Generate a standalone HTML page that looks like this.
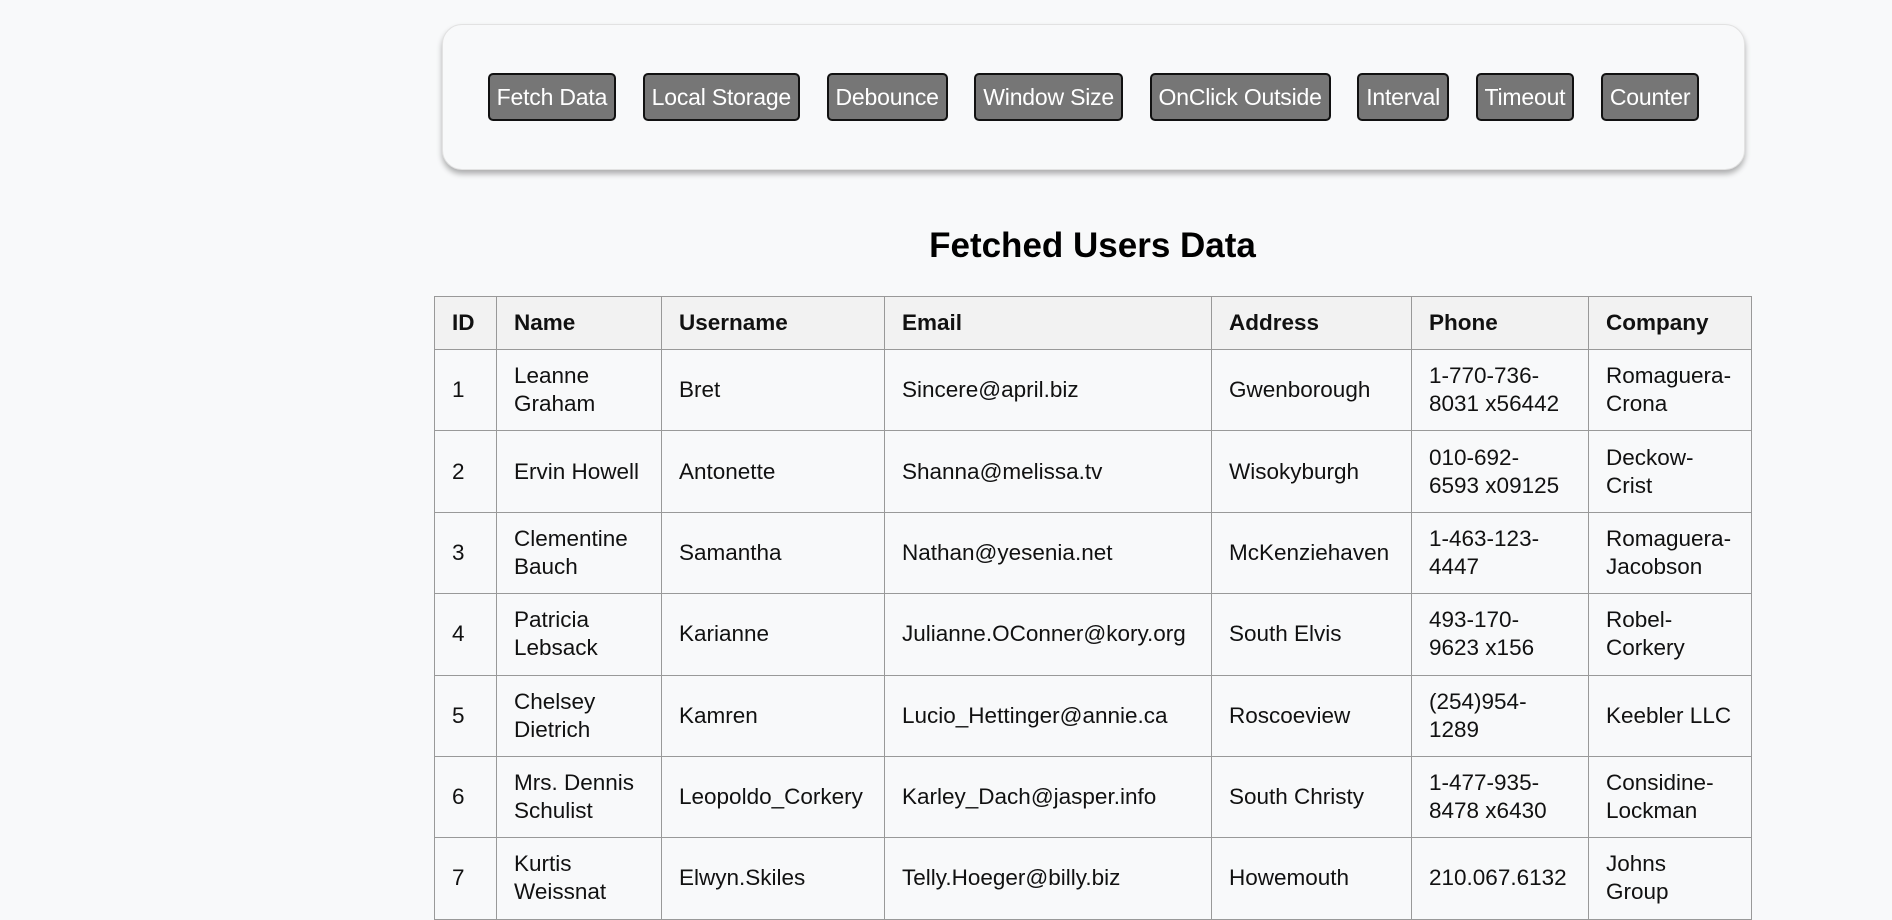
<!DOCTYPE html>
<html><head><meta charset="utf-8"><style>
html,body{margin:0;padding:0;background:#f8f9fa;font-family:"Liberation Sans",Arial,sans-serif;width:1892px;height:867px;overflow:hidden}
.nav{position:absolute;left:442px;top:24px;width:1303px;height:146px;box-sizing:border-box;border:1px solid #e2e2e2;border-radius:20px;background:#f8f9fa;box-shadow:0 4px 6px rgba(0,0,0,.3);display:flex;align-items:center;justify-content:center;gap:26.5px}
.nav span{display:inline-block;background:#767676;color:#fff;border:2px solid #111;border-radius:5px;font-size:23px;height:48px;line-height:44px;box-sizing:border-box;padding:0 7px;white-space:nowrap;letter-spacing:-0.2px}
h2{position:absolute;left:434px;width:1317px;top:226px;margin:0;text-align:center;font-size:35px;font-weight:bold;color:#000}
table{position:absolute;left:434px;top:296px;width:1317px;border-collapse:collapse;table-layout:fixed;font-size:22.5px;color:#111}
td,th{border:1px solid #999;padding:12.2px 17px;line-height:28px;text-align:left;vertical-align:middle}
th{background:#f2f2f2;font-weight:bold;padding:12px 17px}
</style></head><body>
<div class="nav"><span>Fetch Data</span><span>Local Storage</span><span>Debounce</span><span>Window Size</span><span>OnClick Outside</span><span>Interval</span><span>Timeout</span><span>Counter</span></div>
<h2>Fetched Users Data</h2>
<table>
<colgroup><col style="width:62px"><col style="width:165px"><col style="width:223px"><col style="width:327px"><col style="width:200px"><col style="width:177px"><col style="width:163px"></colgroup>
<tr><th>ID</th><th>Name</th><th>Username</th><th>Email</th><th>Address</th><th>Phone</th><th>Company</th></tr>
<tr><td>1</td><td>Leanne Graham</td><td>Bret</td><td>Sincere@april.biz</td><td>Gwenborough</td><td>1-770-736-8031 x56442</td><td>Romaguera-Crona</td></tr>
<tr><td>2</td><td>Ervin Howell</td><td>Antonette</td><td>Shanna@melissa.tv</td><td>Wisokyburgh</td><td>010-692-<br>6593 x09125</td><td>Deckow-Crist</td></tr>
<tr><td>3</td><td>Clementine Bauch</td><td>Samantha</td><td>Nathan@yesenia.net</td><td>McKenziehaven</td><td>1-463-123-4447</td><td>Romaguera-Jacobson</td></tr>
<tr><td>4</td><td>Patricia Lebsack</td><td>Karianne</td><td>Julianne.OConner@kory.org</td><td>South Elvis</td><td>493-170-<br>9623 x156</td><td>Robel-Corkery</td></tr>
<tr><td>5</td><td>Chelsey Dietrich</td><td>Kamren</td><td>Lucio_Hettinger@annie.ca</td><td>Roscoeview</td><td>(254)954-1289</td><td>Keebler LLC</td></tr>
<tr><td>6</td><td>Mrs. Dennis Schulist</td><td>Leopoldo_Corkery</td><td>Karley_Dach@jasper.info</td><td>South Christy</td><td>1-477-935-8478 x6430</td><td>Considine-Lockman</td></tr>
<tr><td>7</td><td>Kurtis Weissnat</td><td>Elwyn.Skiles</td><td>Telly.Hoeger@billy.biz</td><td>Howemouth</td><td>210.067.6132</td><td>Johns<br>Group</td></tr>
</table>
</body></html>
